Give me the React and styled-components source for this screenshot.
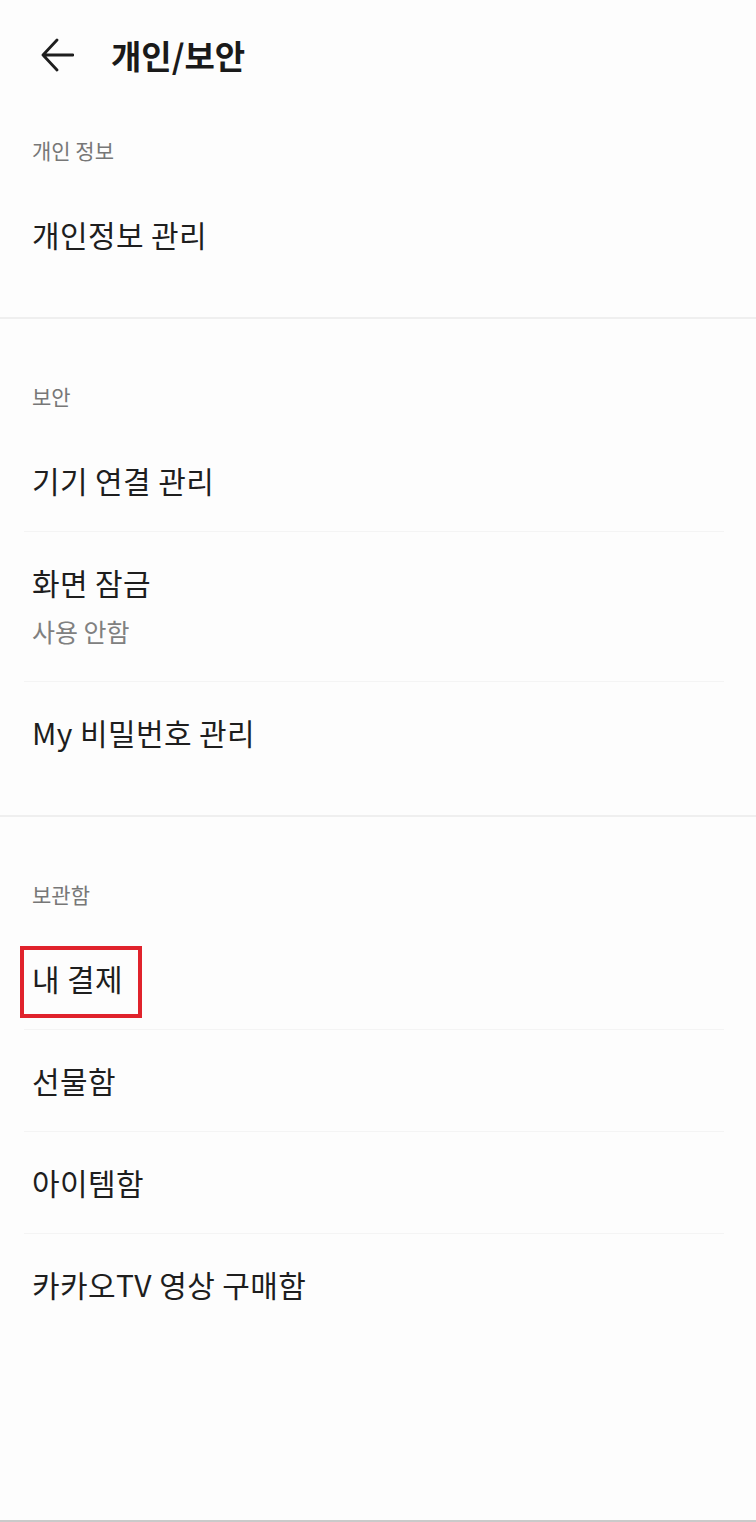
import React from "react";
import styled, { createGlobalStyle } from "styled-components";

const GlobalStyle = createGlobalStyle`
  html, body {
    margin: 0;
    padding: 0;
    background: #fdfdfd;
  }
  body {
    font-family: "Noto Sans CJK KR", "Noto Sans", sans-serif;
    color: #1e1e1e;
  }
`;

const Page = styled.div`
  display: flex;
  flex-direction: column;
  min-height: 100vh;
  background: #fdfdfd;
`;

const TopBar = styled.header`
  display: flex;
  align-items: center;
  gap: 37px;
  height: 110px;
  padding-left: 40px;
`;

const BackButton = styled.button`
  display: flex;
  padding: 0;
  border: none;
  background: none;
  cursor: pointer;
`;

const Title = styled.h1`
  margin: 0;
  font-size: 33px;
  font-weight: 700;
  color: #1a1a1a;
`;

const Section = styled.section`
  padding-top: ${(p) => p.top || 64}px;
  padding-bottom: 32px;
  border-bottom: ${(p) => (p.last ? "none" : "2px solid #efefef")};
`;

const SectionTitle = styled.div`
  padding-left: 32px;
  font-size: 21px;
  line-height: 26px;
  color: #777;
  margin-bottom: 21px;
`;

const Row = styled.div`
  display: flex;
  flex-direction: column;
  gap: 14px;
  margin-left: 24px;
  margin-right: 32px;
  padding: 33px 0 33px 8px;
  border-bottom: 1px solid #f4f4f4;

  &:last-child {
    border-bottom: none;
  }
`;

const Label = styled.span`
  position: relative;
  align-self: flex-start;
  font-size: 30px;
  line-height: 35px;
  letter-spacing: 0.4px;
  color: #1e1e1e;

  ${(p) =>
    p.marked &&
    `
    &::after {
      content: "";
      position: absolute;
      top: -15px;
      bottom: -22px;
      left: -12px;
      right: -19px;
      border: 4px solid #e0232c;
    }
  `}
`;

const Sub = styled.span`
  font-size: 25px;
  line-height: 34px;
  color: #808080;
`;

const BottomEdge = styled.div`
  margin-top: auto;
  height: 2px;
  background: #cacaca;
`;

const BackIcon = () => (
  <svg width="34" height="34" viewBox="0 0 34 34" fill="none">
    <path
      d="M3 17H33M17 2L3 17L17 32"
      stroke="#1e1e1e"
      strokeWidth="2.8"
      strokeLinecap="round"
      strokeLinejoin="round"
    />
  </svg>
);

const sections = [
  {
    title: "개인 정보",
    items: [{ label: "개인정보 관리" }],
  },
  {
    title: "보안",
    items: [
      { label: "기기 연결 관리" },
      { label: "화면 잠금", sub: "사용 안함" },
      { label: "My 비밀번호 관리" },
    ],
  },
  {
    title: "보관함",
    items: [
      { label: "내 결제", marked: true },
      { label: "선물함" },
      { label: "아이템함" },
      { label: "카카오TV 영상 구매함" },
    ],
  },
];

export default function App() {
  return (
    <Page>
      <GlobalStyle />
      <TopBar>
        <BackButton aria-label="뒤로">
          <BackIcon />
        </BackButton>
        <Title>개인/보안</Title>
      </TopBar>
      {sections.map((section, i) => (
        <Section
          key={section.title}
          top={i === 0 ? 27 : 64}
          last={i === sections.length - 1}
        >
          <SectionTitle>{section.title}</SectionTitle>
          {section.items.map((item) => (
            <Row key={item.label}>
              <Label marked={item.marked}>{item.label}</Label>
              {item.sub && <Sub>{item.sub}</Sub>}
            </Row>
          ))}
        </Section>
      ))}
      <BottomEdge />
    </Page>
  );
}
